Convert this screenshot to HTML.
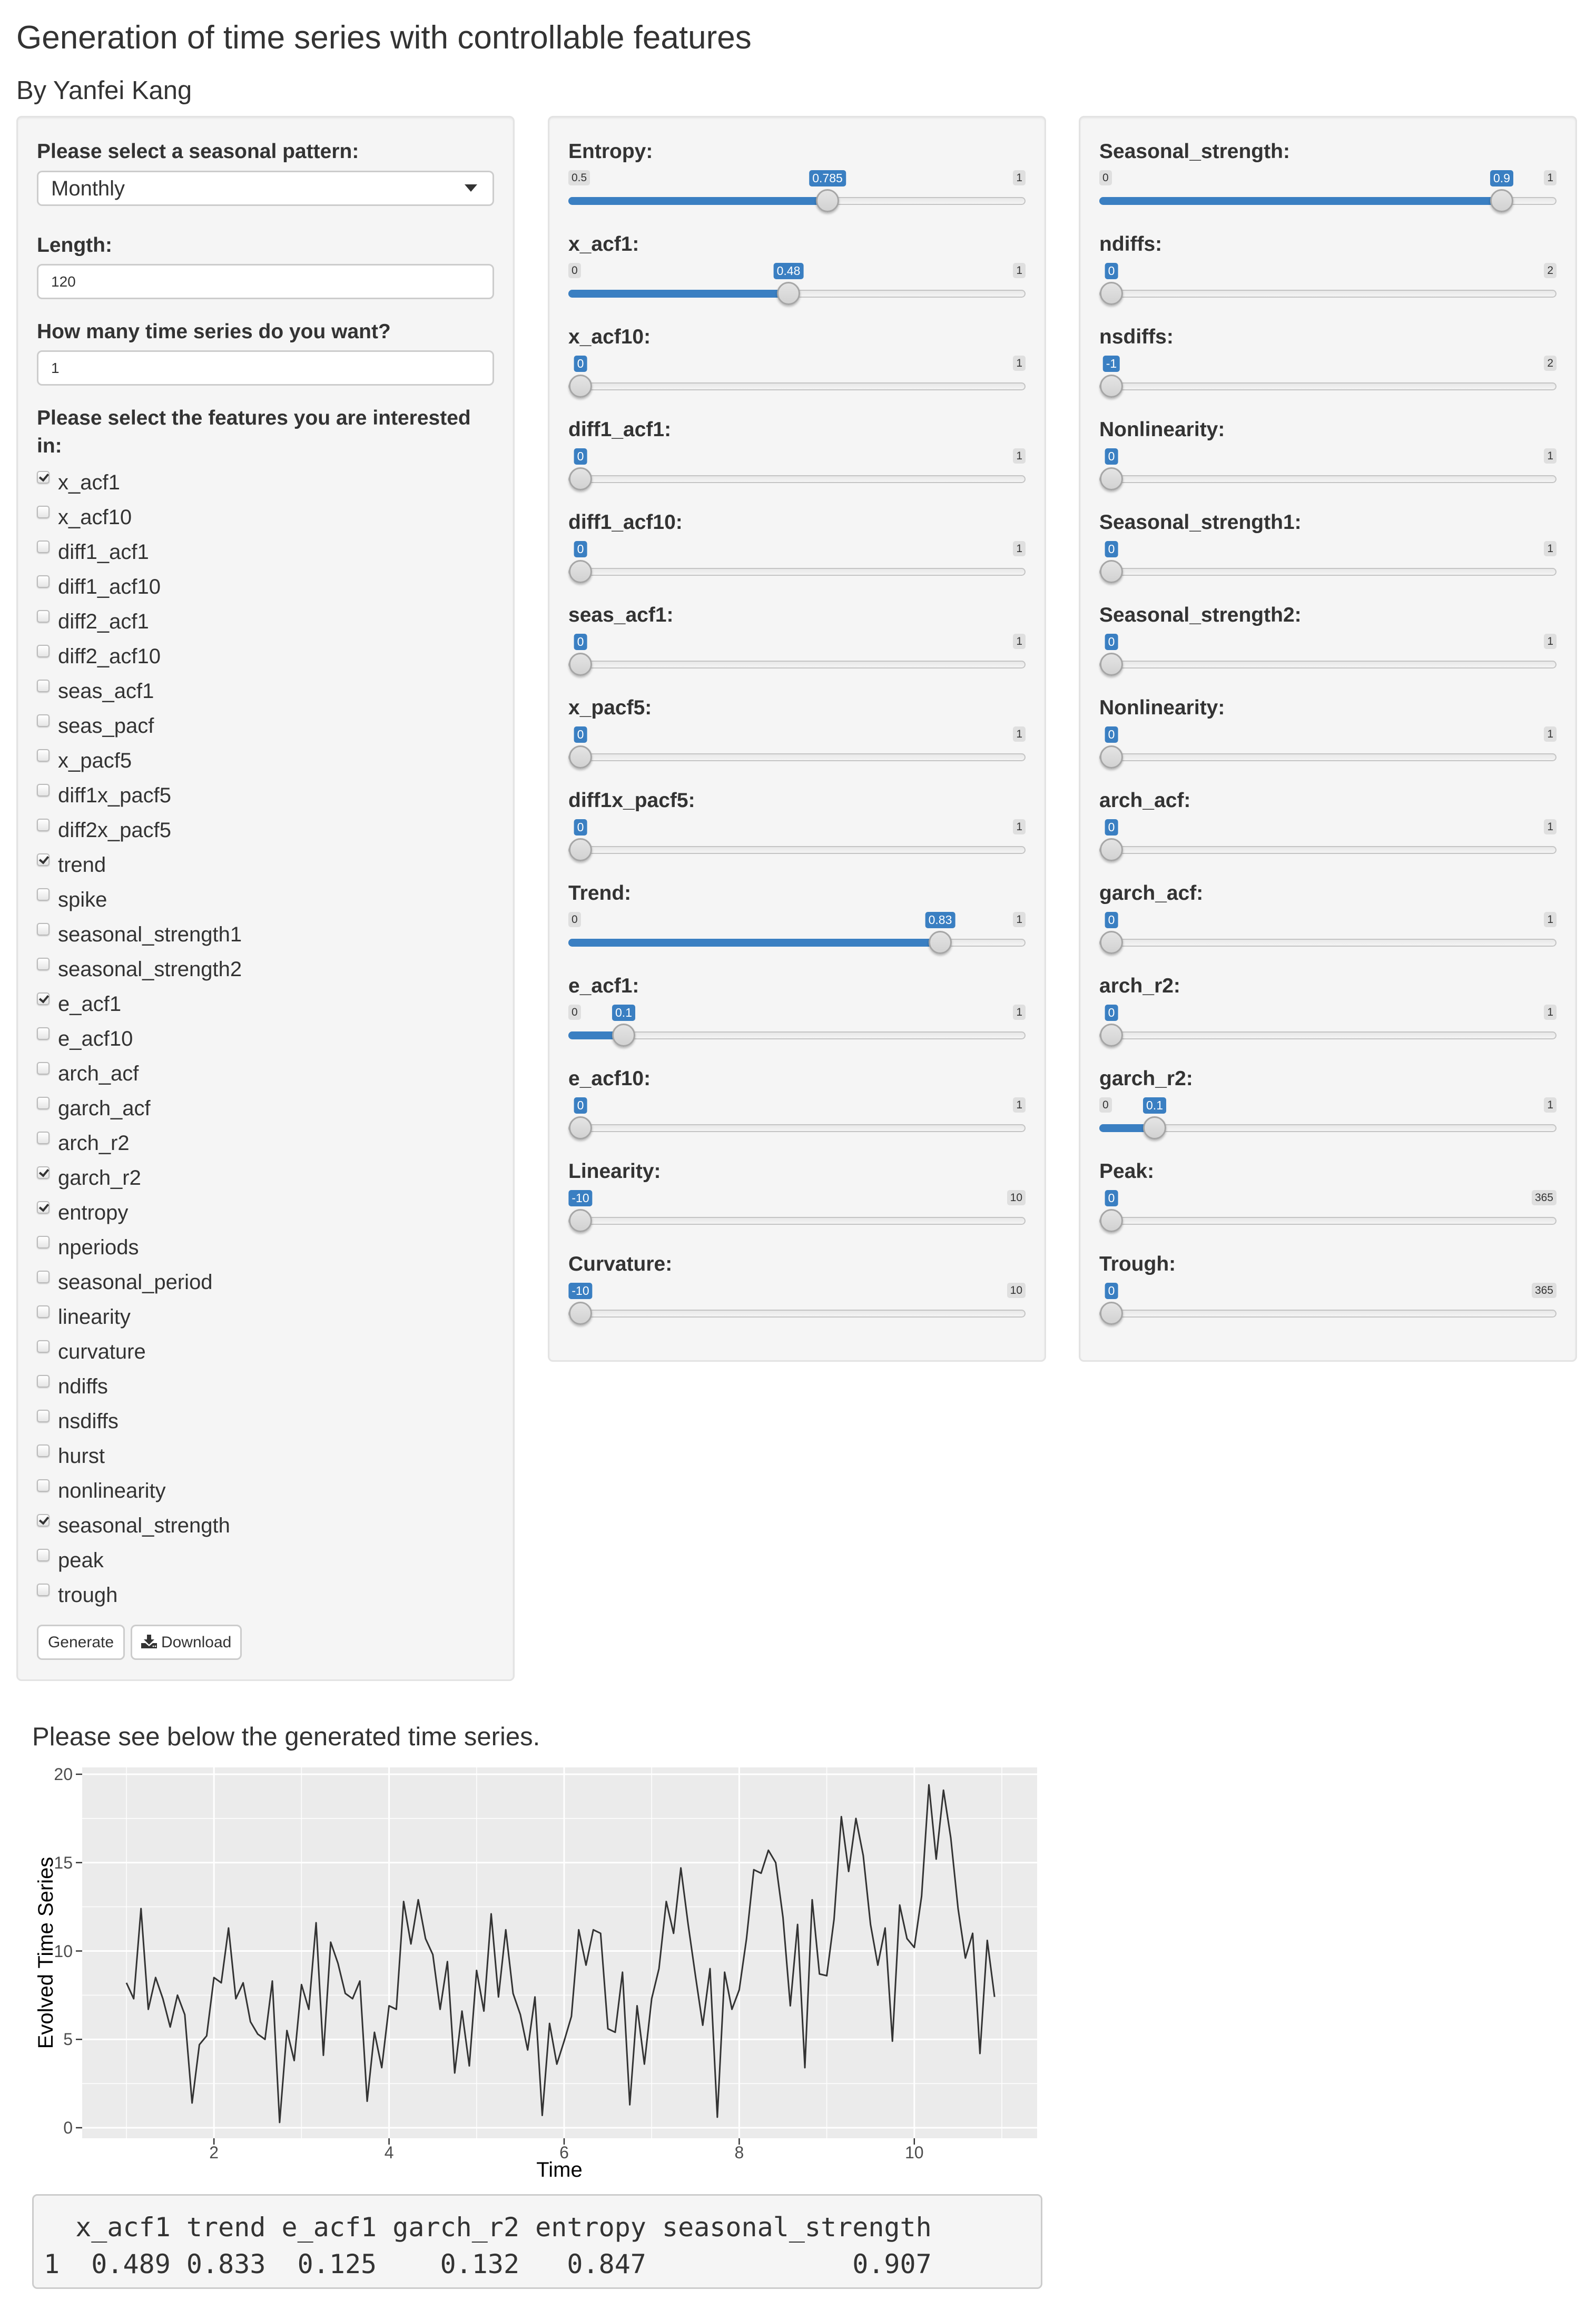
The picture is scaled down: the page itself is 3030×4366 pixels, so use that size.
<!DOCTYPE html>
<html><head><meta charset="utf-8">
<style>
*{box-sizing:border-box;margin:0;padding:0}
html,body{width:3030px;height:4366px;background:#fff;overflow:hidden}
body{position:relative;font-family:"Liberation Sans",Arial,sans-serif;color:#333}
.a{position:absolute;white-space:nowrap;line-height:1}
.panel{position:absolute;background:#f5f5f5;border:3px solid #e3e3e3;border-radius:10px;box-shadow:inset 0 2px 3px rgba(0,0,0,.05)}
.lbl{position:absolute;font-weight:bold;font-size:39px;line-height:1;white-space:nowrap}
.box{position:absolute;background:#fff;border:3px solid #ccc;border-radius:10px}
.cb{position:absolute;left:70px;width:24px;height:24px;border:2px solid #bbb;border-radius:5px;background:linear-gradient(#fff,#e6e6e6);box-shadow:0 1px 2px rgba(0,0,0,.2)}
.cb.on::after{content:"";position:absolute;left:6px;top:0px;width:7px;height:13px;border:solid #333;border-width:0 4px 4px 0;transform:rotate(40deg)}
.ct{position:absolute;left:110px;font-size:40px;line-height:1;white-space:nowrap}
.s{position:absolute;width:868px;height:170px}
.s .lb{position:absolute;left:0;top:8px;font-weight:bold;font-size:39px;line-height:1;white-space:nowrap}
.s .g{position:absolute;top:63px;height:29px;line-height:29px;font-size:21px;background:#dfdfdf;color:#333;padding:0 6px;border-radius:5px}
.s .tr{position:absolute;left:0;top:114px;width:868px;height:15px;border:2px solid #c4c4c4;border-radius:8px;background:linear-gradient(#e8e8e8,#f4f4f4)}
.s .bar{position:absolute;left:0;top:114px;height:15px;background:#3a7fc2;border-radius:8px 0 0 8px}
.s .h{position:absolute;top:99px;width:44px;height:44px;border-radius:50%;border:3px solid #a6a6a6;background:linear-gradient(#e4e4e4,#d2d2d2);box-shadow:0 3px 4px rgba(0,0,0,.25)}
.s .v{position:absolute;top:63px;height:31px;line-height:31px;font-size:23px;background:#3a7fc2;color:#fff;padding:0 6px;border-radius:5px;transform:translateX(-50%)}
.btn{position:absolute;top:3084px;height:67px;background:#fff;border:3px solid #ccc;border-radius:10px;font-size:30px;line-height:61px;text-align:center}
</style></head><body>

<div class="a" style="left:31px;top:41px;font-size:62px">Generation of time series with controllable features</div>
<div class="a" style="left:31px;top:148px;font-size:49px">By Yanfei Kang</div>

<div class="panel" style="left:31px;top:220px;width:946px;height:2971px"></div>
<div class="lbl" style="left:70px;top:268px">Please select a seasonal pattern:</div>
<div class="box" style="left:70px;top:324px;width:868px;height:67px"></div>
<div class="a" style="left:97px;top:338px;font-size:40px">Monthly</div>
<div class="a" style="left:882px;top:350px;width:0;height:0;border-left:12px solid transparent;border-right:12px solid transparent;border-top:14px solid #333"></div>
<div class="lbl" style="left:70px;top:446px">Length:</div>
<div class="box" style="left:70px;top:501px;width:868px;height:67px"></div>
<div class="a" style="left:97px;top:521px;font-size:28px">120</div>
<div class="lbl" style="left:70px;top:610px">How many time series do you want?</div>
<div class="box" style="left:70px;top:665px;width:868px;height:67px"></div>
<div class="a" style="left:97px;top:685px;font-size:28px">1</div>
<div class="lbl" style="left:70px;top:774px">Please select the features you are interested</div>
<div class="lbl" style="left:70px;top:827px">in:</div>

<div class="cb on" style="top:894px"></div><div class="ct" style="top:896px">x_acf1</div>
<div class="cb" style="top:960px"></div><div class="ct" style="top:962px">x_acf10</div>
<div class="cb" style="top:1026px"></div><div class="ct" style="top:1028px">diff1_acf1</div>
<div class="cb" style="top:1092px"></div><div class="ct" style="top:1094px">diff1_acf10</div>
<div class="cb" style="top:1158px"></div><div class="ct" style="top:1160px">diff2_acf1</div>
<div class="cb" style="top:1224px"></div><div class="ct" style="top:1226px">diff2_acf10</div>
<div class="cb" style="top:1290px"></div><div class="ct" style="top:1292px">seas_acf1</div>
<div class="cb" style="top:1356px"></div><div class="ct" style="top:1358px">seas_pacf</div>
<div class="cb" style="top:1422px"></div><div class="ct" style="top:1424px">x_pacf5</div>
<div class="cb" style="top:1488px"></div><div class="ct" style="top:1490px">diff1x_pacf5</div>
<div class="cb" style="top:1554px"></div><div class="ct" style="top:1556px">diff2x_pacf5</div>
<div class="cb on" style="top:1620px"></div><div class="ct" style="top:1622px">trend</div>
<div class="cb" style="top:1686px"></div><div class="ct" style="top:1688px">spike</div>
<div class="cb" style="top:1752px"></div><div class="ct" style="top:1754px">seasonal_strength1</div>
<div class="cb" style="top:1818px"></div><div class="ct" style="top:1820px">seasonal_strength2</div>
<div class="cb on" style="top:1884px"></div><div class="ct" style="top:1886px">e_acf1</div>
<div class="cb" style="top:1950px"></div><div class="ct" style="top:1952px">e_acf10</div>
<div class="cb" style="top:2016px"></div><div class="ct" style="top:2018px">arch_acf</div>
<div class="cb" style="top:2082px"></div><div class="ct" style="top:2084px">garch_acf</div>
<div class="cb" style="top:2148px"></div><div class="ct" style="top:2150px">arch_r2</div>
<div class="cb on" style="top:2214px"></div><div class="ct" style="top:2216px">garch_r2</div>
<div class="cb on" style="top:2280px"></div><div class="ct" style="top:2282px">entropy</div>
<div class="cb" style="top:2346px"></div><div class="ct" style="top:2348px">nperiods</div>
<div class="cb" style="top:2412px"></div><div class="ct" style="top:2414px">seasonal_period</div>
<div class="cb" style="top:2478px"></div><div class="ct" style="top:2480px">linearity</div>
<div class="cb" style="top:2544px"></div><div class="ct" style="top:2546px">curvature</div>
<div class="cb" style="top:2610px"></div><div class="ct" style="top:2612px">ndiffs</div>
<div class="cb" style="top:2676px"></div><div class="ct" style="top:2678px">nsdiffs</div>
<div class="cb" style="top:2742px"></div><div class="ct" style="top:2744px">hurst</div>
<div class="cb" style="top:2808px"></div><div class="ct" style="top:2810px">nonlinearity</div>
<div class="cb on" style="top:2874px"></div><div class="ct" style="top:2876px">seasonal_strength</div>
<div class="cb" style="top:2940px"></div><div class="ct" style="top:2942px">peak</div>
<div class="cb" style="top:3006px"></div><div class="ct" style="top:3008px">trough</div>

<div class="btn" style="left:70px;width:167px">Generate</div>
<div class="btn" style="left:248px;width:211px"><svg width="30" height="26" viewBox="0 0 30 26" style="vertical-align:-2px"><path d="M11 0h8v9h6l-10 10L5 9h6z" fill="#333"/><path d="M0 16h8l7 6 7-6h8v10H0z" fill="#333"/><circle cx="23" cy="22" r="1.4" fill="#fff"/><circle cx="27" cy="22" r="1.4" fill="#fff"/></svg> Download</div>

<div class="panel" style="left:1040px;top:220px;width:946px;height:2365px"></div>
<div class="panel" style="left:2048px;top:220px;width:946px;height:2365px"></div>

<div class="s" style="left:1079px;top:260px"><div class="lb">Entropy:</div><span class="g" style="left:0">0.5</span><span class="g" style="right:0">1</span><div class="tr"></div><div class="bar" style="width:492px"></div><div class="h" style="left:470px"></div><span class="v" style="left:492px">0.785</span></div>
<div class="s" style="left:1079px;top:436px"><div class="lb">x_acf1:</div><span class="g" style="left:0">0</span><span class="g" style="right:0">1</span><div class="tr"></div><div class="bar" style="width:418px"></div><div class="h" style="left:396px"></div><span class="v" style="left:418px">0.48</span></div>
<div class="s" style="left:1079px;top:612px"><div class="lb">x_acf10:</div><span class="g" style="right:0">1</span><div class="tr"></div><div class="h" style="left:1px"></div><span class="v" style="left:23px">0</span></div>
<div class="s" style="left:1079px;top:788px"><div class="lb">diff1_acf1:</div><span class="g" style="right:0">1</span><div class="tr"></div><div class="h" style="left:1px"></div><span class="v" style="left:23px">0</span></div>
<div class="s" style="left:1079px;top:964px"><div class="lb">diff1_acf10:</div><span class="g" style="right:0">1</span><div class="tr"></div><div class="h" style="left:1px"></div><span class="v" style="left:23px">0</span></div>
<div class="s" style="left:1079px;top:1140px"><div class="lb">seas_acf1:</div><span class="g" style="right:0">1</span><div class="tr"></div><div class="h" style="left:1px"></div><span class="v" style="left:23px">0</span></div>
<div class="s" style="left:1079px;top:1316px"><div class="lb">x_pacf5:</div><span class="g" style="right:0">1</span><div class="tr"></div><div class="h" style="left:1px"></div><span class="v" style="left:23px">0</span></div>
<div class="s" style="left:1079px;top:1492px"><div class="lb">diff1x_pacf5:</div><span class="g" style="right:0">1</span><div class="tr"></div><div class="h" style="left:1px"></div><span class="v" style="left:23px">0</span></div>
<div class="s" style="left:1079px;top:1668px"><div class="lb">Trend:</div><span class="g" style="left:0">0</span><span class="g" style="right:0">1</span><div class="tr"></div><div class="bar" style="width:706px"></div><div class="h" style="left:684px"></div><span class="v" style="left:706px">0.83</span></div>
<div class="s" style="left:1079px;top:1844px"><div class="lb">e_acf1:</div><span class="g" style="left:0">0</span><span class="g" style="right:0">1</span><div class="tr"></div><div class="bar" style="width:105px"></div><div class="h" style="left:83px"></div><span class="v" style="left:105px">0.1</span></div>
<div class="s" style="left:1079px;top:2020px"><div class="lb">e_acf10:</div><span class="g" style="right:0">1</span><div class="tr"></div><div class="h" style="left:1px"></div><span class="v" style="left:23px">0</span></div>
<div class="s" style="left:1079px;top:2196px"><div class="lb">Linearity:</div><span class="g" style="right:0">10</span><div class="tr"></div><div class="h" style="left:1px"></div><span class="v" style="left:23px">-10</span></div>
<div class="s" style="left:1079px;top:2372px"><div class="lb">Curvature:</div><span class="g" style="right:0">10</span><div class="tr"></div><div class="h" style="left:1px"></div><span class="v" style="left:23px">-10</span></div>

<div class="s" style="left:2087px;top:260px"><div class="lb">Seasonal_strength:</div><span class="g" style="left:0">0</span><span class="g" style="right:0">1</span><div class="tr"></div><div class="bar" style="width:764px"></div><div class="h" style="left:742px"></div><span class="v" style="left:764px">0.9</span></div>
<div class="s" style="left:2087px;top:436px"><div class="lb">ndiffs:</div><span class="g" style="right:0">2</span><div class="tr"></div><div class="h" style="left:1px"></div><span class="v" style="left:23px">0</span></div>
<div class="s" style="left:2087px;top:612px"><div class="lb">nsdiffs:</div><span class="g" style="right:0">2</span><div class="tr"></div><div class="h" style="left:1px"></div><span class="v" style="left:23px">-1</span></div>
<div class="s" style="left:2087px;top:788px"><div class="lb">Nonlinearity:</div><span class="g" style="right:0">1</span><div class="tr"></div><div class="h" style="left:1px"></div><span class="v" style="left:23px">0</span></div>
<div class="s" style="left:2087px;top:964px"><div class="lb">Seasonal_strength1:</div><span class="g" style="right:0">1</span><div class="tr"></div><div class="h" style="left:1px"></div><span class="v" style="left:23px">0</span></div>
<div class="s" style="left:2087px;top:1140px"><div class="lb">Seasonal_strength2:</div><span class="g" style="right:0">1</span><div class="tr"></div><div class="h" style="left:1px"></div><span class="v" style="left:23px">0</span></div>
<div class="s" style="left:2087px;top:1316px"><div class="lb">Nonlinearity:</div><span class="g" style="right:0">1</span><div class="tr"></div><div class="h" style="left:1px"></div><span class="v" style="left:23px">0</span></div>
<div class="s" style="left:2087px;top:1492px"><div class="lb">arch_acf:</div><span class="g" style="right:0">1</span><div class="tr"></div><div class="h" style="left:1px"></div><span class="v" style="left:23px">0</span></div>
<div class="s" style="left:2087px;top:1668px"><div class="lb">garch_acf:</div><span class="g" style="right:0">1</span><div class="tr"></div><div class="h" style="left:1px"></div><span class="v" style="left:23px">0</span></div>
<div class="s" style="left:2087px;top:1844px"><div class="lb">arch_r2:</div><span class="g" style="right:0">1</span><div class="tr"></div><div class="h" style="left:1px"></div><span class="v" style="left:23px">0</span></div>
<div class="s" style="left:2087px;top:2020px"><div class="lb">garch_r2:</div><span class="g" style="left:0">0</span><span class="g" style="right:0">1</span><div class="tr"></div><div class="bar" style="width:105px"></div><div class="h" style="left:83px"></div><span class="v" style="left:105px">0.1</span></div>
<div class="s" style="left:2087px;top:2196px"><div class="lb">Peak:</div><span class="g" style="right:0">365</span><div class="tr"></div><div class="h" style="left:1px"></div><span class="v" style="left:23px">0</span></div>
<div class="s" style="left:2087px;top:2372px"><div class="lb">Trough:</div><span class="g" style="right:0">365</span><div class="tr"></div><div class="h" style="left:1px"></div><span class="v" style="left:23px">0</span></div>

<div class="a" style="left:61px;top:3273px;font-size:49px">Please see below the generated time series.</div>

<svg class="a" style="left:0;top:0" width="3030" height="4366">
<rect x="156" y="3355" width="1813" height="704" fill="#ebebeb"/>
<g stroke="#fff" stroke-width="1.5">
<line x1="156" x2="1969" y1="3955.1" y2="3955.1"/><line x1="156" x2="1969" y1="3787.4" y2="3787.4"/><line x1="156" x2="1969" y1="3619.6" y2="3619.6"/><line x1="156" x2="1969" y1="3451.9" y2="3451.9"/>
<line y1="3355" y2="4059" x1="240" x2="240"/><line y1="3355" y2="4059" x1="572.4" x2="572.4"/><line y1="3355" y2="4059" x1="904.8" x2="904.8"/><line y1="3355" y2="4059" x1="1237.2" x2="1237.2"/><line y1="3355" y2="4059" x1="1569.6" x2="1569.6"/><line y1="3355" y2="4059" x1="1902" x2="1902"/>
</g>
<g stroke="#fff" stroke-width="3">
<line x1="156" x2="1969" y1="4039" y2="4039"/><line x1="156" x2="1969" y1="3871.25" y2="3871.25"/><line x1="156" x2="1969" y1="3703.5" y2="3703.5"/><line x1="156" x2="1969" y1="3535.75" y2="3535.75"/><line x1="156" x2="1969" y1="3368" y2="3368"/>
<line y1="3355" y2="4059" x1="406.2" x2="406.2"/><line y1="3355" y2="4059" x1="738.6" x2="738.6"/><line y1="3355" y2="4059" x1="1071" x2="1071"/><line y1="3355" y2="4059" x1="1403.4" x2="1403.4"/><line y1="3355" y2="4059" x1="1735.8" x2="1735.8"/>
</g>
<g stroke="#333" stroke-width="2.5">
<line x1="144" x2="156" y1="4039" y2="4039"/><line x1="144" x2="156" y1="3871.25" y2="3871.25"/><line x1="144" x2="156" y1="3703.5" y2="3703.5"/><line x1="144" x2="156" y1="3535.75" y2="3535.75"/><line x1="144" x2="156" y1="3368" y2="3368"/>
<line y1="4059" y2="4071" x1="406.2" x2="406.2"/><line y1="4059" y2="4071" x1="738.6" x2="738.6"/><line y1="4059" y2="4071" x1="1071" x2="1071"/><line y1="4059" y2="4071" x1="1403.4" x2="1403.4"/><line y1="4059" y2="4071" x1="1735.8" x2="1735.8"/>
</g>
<g font-family="Liberation Sans, Arial, sans-serif" font-size="32" fill="#4d4d4d">
<text x="138" y="4050" text-anchor="end">0</text><text x="138" y="3882" text-anchor="end">5</text><text x="138" y="3715" text-anchor="end">10</text><text x="138" y="3547" text-anchor="end">15</text><text x="138" y="3379" text-anchor="end">20</text>
<text x="406.2" y="4097" text-anchor="middle">2</text><text x="738.6" y="4097" text-anchor="middle">4</text><text x="1071" y="4097" text-anchor="middle">6</text><text x="1403.4" y="4097" text-anchor="middle">8</text><text x="1735.8" y="4097" text-anchor="middle">10</text>
</g>
<text x="1062" y="4132" text-anchor="middle" font-family="Liberation Sans, Arial, sans-serif" font-size="40" fill="#000">Time</text>
<text transform="translate(100,3707) rotate(-90)" text-anchor="middle" font-family="Liberation Sans, Arial, sans-serif" font-size="40" fill="#000">Evolved Time Series</text>
<g transform="translate(240,4039) scale(13.85,-33.55)">
<polyline fill="none" stroke="#333" stroke-width="3" vector-effect="non-scaling-stroke" stroke-linejoin="round" points="0,8.2 1,7.3 2,12.4 3,6.7 4,8.5 5,7.3 6,5.7 7,7.5 8,6.4 9,1.4 10,4.7 11,5.2 12,8.5 13,8.2 14,11.3 15,7.3 16,8.2 17,6.0 18,5.3 19,5.0 20,8.3 21,0.3 22,5.5 23,3.8 24,8.1 25,6.7 26,11.6 27,4.1 28,10.5 29,9.3 30,7.6 31,7.3 32,8.3 33,1.5 34,5.4 35,3.4 36,6.9 37,6.7 38,12.8 39,10.4 40,12.9 41,10.7 42,9.8 43,6.7 44,9.4 45,3.1 46,6.6 47,3.5 48,8.9 49,6.6 50,12.1 51,7.4 52,11.2 53,7.6 54,6.4 55,4.4 56,7.4 57,0.7 58,5.9 59,3.6 60,4.9 61,6.3 62,11.2 63,9.2 64,11.2 65,11.0 66,5.6 67,5.4 68,8.8 69,1.3 70,6.9 71,3.6 72,7.3 73,9.0 74,12.8 75,11.0 76,14.7 77,11.5 78,8.6 79,5.8 80,9.0 81,0.6 82,8.8 83,6.7 84,7.8 85,10.7 86,14.6 87,14.4 88,15.7 89,15.0 90,11.9 91,6.9 92,11.5 93,3.4 94,12.9 95,8.7 96,8.6 97,11.8 98,17.6 99,14.5 100,17.5 101,15.4 102,11.5 103,9.2 104,11.3 105,4.9 106,12.6 107,10.7 108,10.2 109,13.1 110,19.4 111,15.2 112,19.1 113,16.4 114,12.4 115,9.6 116,11.0 117,4.2 118,10.6 119,7.4"/>
</g>
</svg>

<div class="a" style="left:61px;top:4165px;width:1918px;height:180px;background:#f5f5f5;border:3px solid #ccc;border-radius:10px"></div>
<pre style="position:absolute;white-space:pre;left:83px;top:4193px;font-family:'DejaVu Sans Mono','Liberation Mono',monospace;font-size:50px;line-height:70px;color:#333">  x_acf1 trend e_acf1 garch_r2 entropy seasonal_strength
1  0.489 0.833  0.125    0.132   0.847             0.907</pre>

</body></html>
